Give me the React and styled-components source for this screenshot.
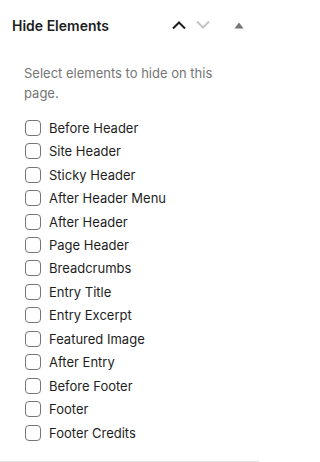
import React from "react";
import styled, { createGlobalStyle } from "styled-components";

const Global = createGlobalStyle`
  html, body { margin: 0; padding: 0; background: #fff; }
  body { font-family: Inter, "Noto Sans", sans-serif; -webkit-font-smoothing: antialiased; }
  * { box-sizing: border-box; }
`;

const Panel = styled.section`
  width: 100%;
  max-width: 259px;
  height: 462px;
  background: #fff;
  border-bottom: 1px solid #e6e6e6;
  display: flex;
  flex-direction: column;
`;

const Header = styled.div`
  display: flex;
  align-items: center;
  height: 50px;
  padding: 0 8px 0 12px;
`;

const Title = styled.h2`
  margin: 0;
  flex: 1;
  font-size: 14px;
  font-weight: 600;
  color: #1e1e1e;
  letter-spacing: 0;
`;

const IconButton = styled.button`
  border: 0;
  background: none;
  padding: 0;
  width: 24px;
  height: 24px;
  display: flex;
  align-items: center;
  justify-content: center;
  color: ${(p) => p.$color};
  margin-left: ${(p) => p.$ml || 0}px;
`;

const Body = styled.div`
  padding: 13px 16px 0 24px;
`;

const Description = styled.p`
  margin: 0 0 13px;
  font-size: 13px;
  line-height: 20px;
  color: #757575;
`;

const List = styled.div`
  display: flex;
  flex-direction: column;
`;

const Row = styled.label`
  display: flex;
  align-items: center;
  height: 23.46px;
  gap: 8px;
  font-size: 13px;
  color: #1e1e1e;
`;

const Box = styled.span`
  width: 16px;
  height: 16px;
  border: 1px solid #757575;
  border-radius: 4px;
  margin-left: 1px;
  flex: none;
`;

const items = [
  "Before Header",
  "Site Header",
  "Sticky Header",
  "After Header Menu",
  "After Header",
  "Page Header",
  "Breadcrumbs",
  "Entry Title",
  "Entry Excerpt",
  "Featured Image",
  "After Entry",
  "Before Footer",
  "Footer",
  "Footer Credits",
];

export default function App() {
  return (
    <>
      <Global />
      <Panel>
        <Header>
          <Title>Hide Elements</Title>
          <IconButton $color="#1e1e1e">
            <svg width="16" height="10" viewBox="0 0 16 10" fill="none">
              <path d="M2 8.5 L8 2.5 L14 8.5" stroke="currentColor" strokeWidth="2" />
            </svg>
          </IconButton>
          <IconButton $color="#c4c4c4">
            <svg width="16" height="10" viewBox="0 0 16 10" fill="none">
              <path d="M2 1.5 L8 7.5 L14 1.5" stroke="currentColor" strokeWidth="2" />
            </svg>
          </IconButton>
          <IconButton $color="#757575" $ml={12}>
            <svg width="10" height="7" viewBox="0 0 10 7">
              <path d="M5 0.5 L9.5 6.5 L0.5 6.5 Z" fill="currentColor" />
            </svg>
          </IconButton>
        </Header>
        <Body>
          <Description>Select elements to hide on this page.</Description>
          <List>
            {items.map((t) => (
              <Row key={t}>
                <Box />
                {t}
              </Row>
            ))}
          </List>
        </Body>
      </Panel>
    </>
  );
}
